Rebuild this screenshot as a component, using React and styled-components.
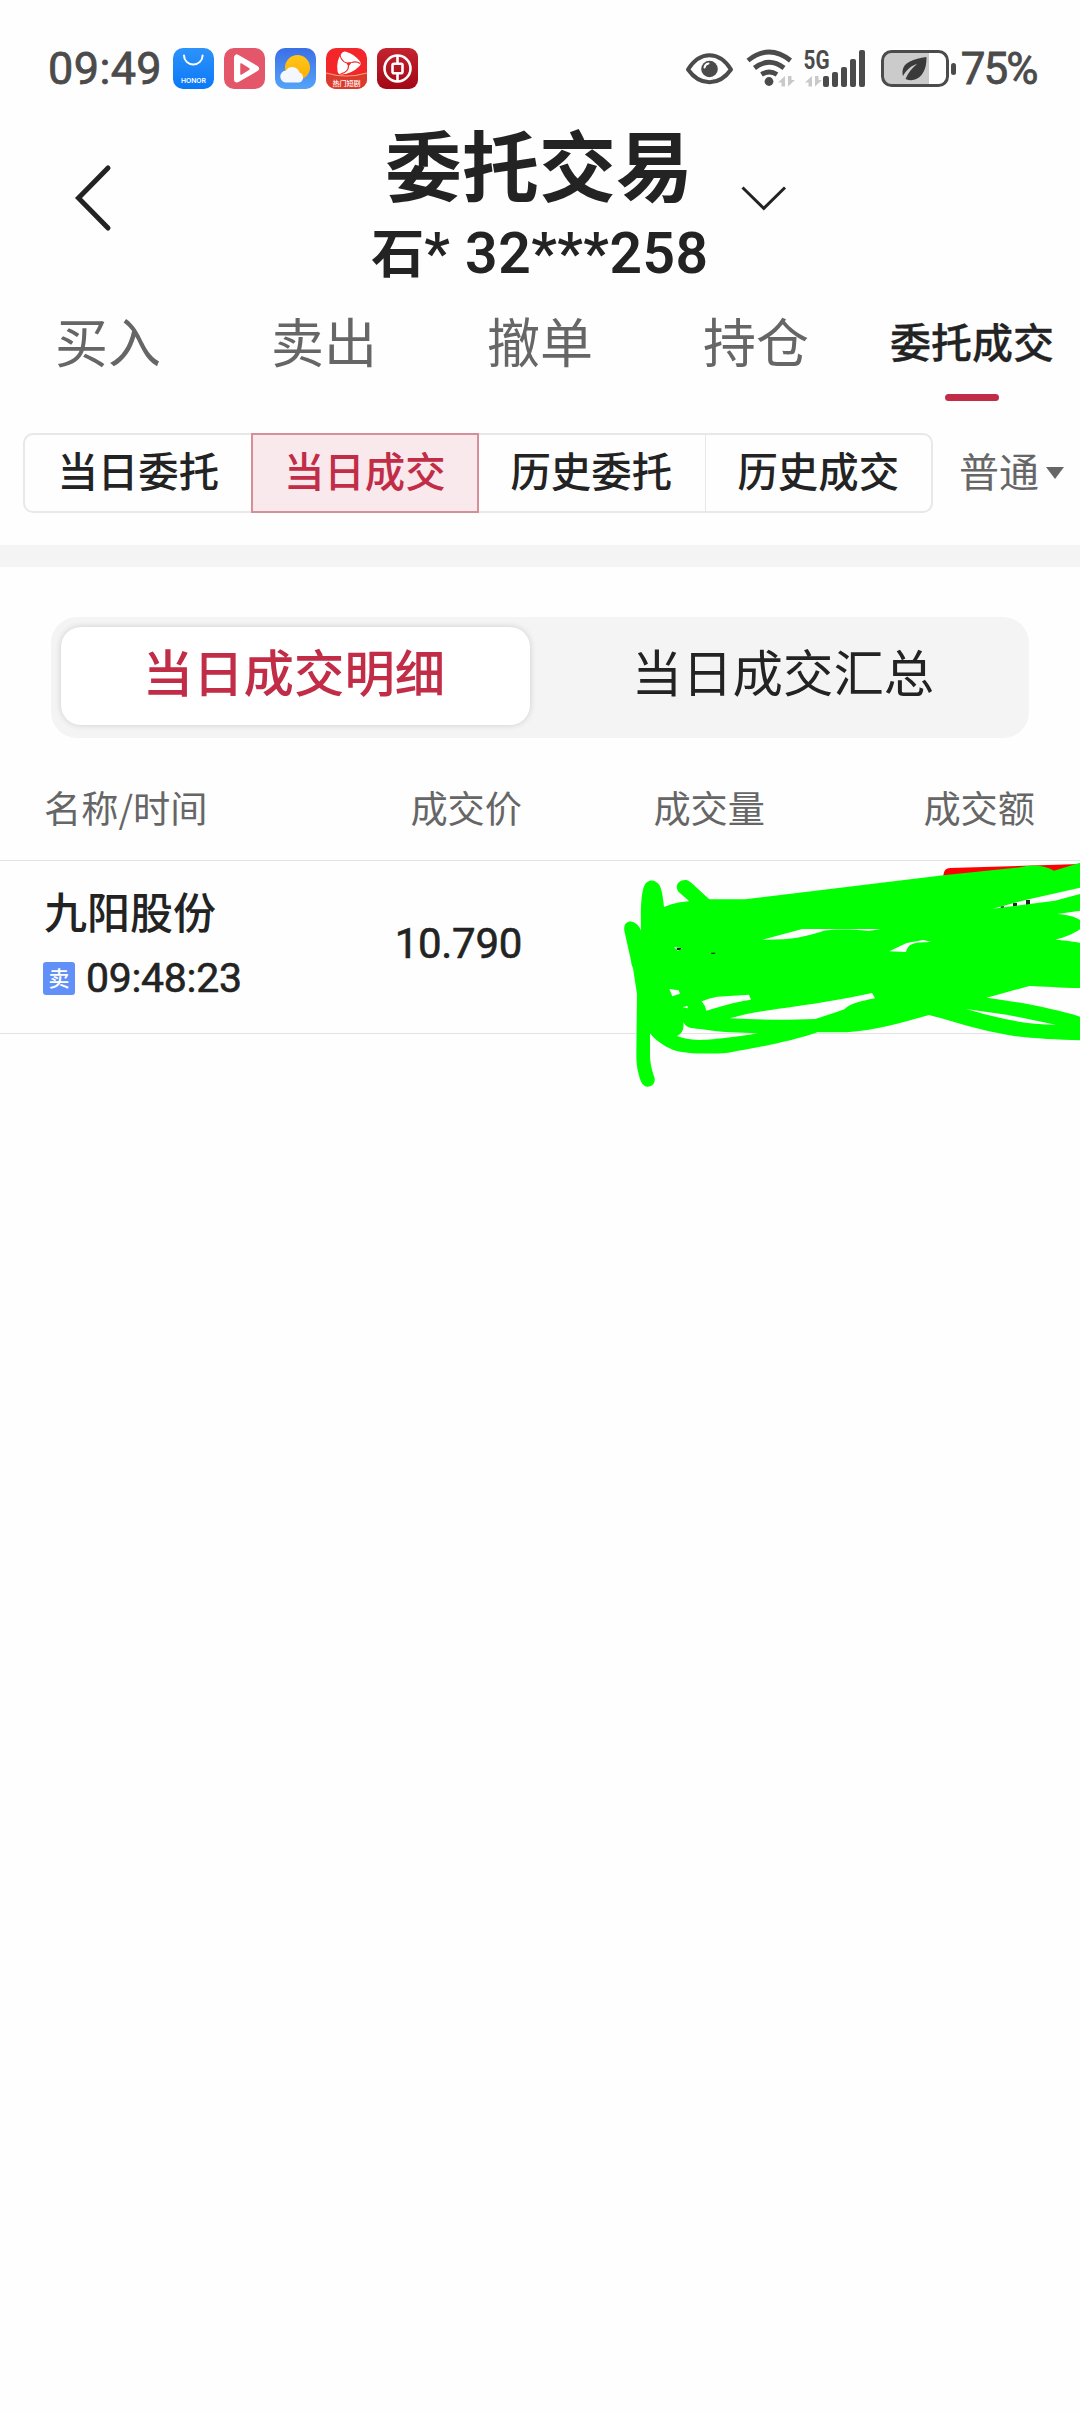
import React from "react";
import styled, { createGlobalStyle } from "styled-components";

const Global = createGlobalStyle`
  * { box-sizing: border-box; }
  body { margin: 0; background: #fefefe; font-family: "Noto Sans CJK SC", sans-serif; color: #232323; }
  svg { display: block; flex: none; overflow: visible; }
`;
const Screen = styled.div`
  width: 1080px; height: 2412px; overflow: hidden; display: flex; flex-direction: column;
`;
const StatusBar = styled.header`
  height: 120px; flex: none; padding: 17px 43.5px 0 48px; display: flex; align-items: center; justify-content: space-between; color: #4b4b4b;
`;
const StatusSide = styled.div`display: flex; align-items: center;`;
const StatusText = styled.span`
  font: 400 ${(p) => p.$size || 45}px/52px Roboto, sans-serif; letter-spacing: ${(p) => p.$track || 0}px; -webkit-text-stroke: 0.8px #4b4b4b;
`;
const AppIcons = styled.div`display: flex; gap: 10px; margin-left: 11px;`;
const TitleBar = styled.div`
  height: 170px; flex: none; display: grid; grid-template-columns: 360px 360px 360px;
`;
const BackSlot = styled.div`padding: 44px 0 0 74px;`;
const MenuSlot = styled.div`padding: 65px 0 0 20px;`;
const TitleStack = styled.div`display: flex; flex-direction: column; align-items: center; white-space: nowrap;`;
const Title = styled.h1`margin: 0; font-size: 77px; line-height: 86px; font-weight: 700; padding-right: 2px;`;
const Account = styled.div`
  margin-top: 16px; font-weight: 700; font-size: 53px; line-height: 56px; display: flex;
`;
const AccountNumber = styled.span`
  font-family: Roboto, sans-serif; font-size: 57px; font-weight: 600; letter-spacing: 0.5px; white-space: pre; padding-top: 4px;
`;
const Tabs = styled.nav`display: grid; grid-template-columns: repeat(5, 1fr); height: 143px; flex: none;`;
const Tab = styled.div`
  display: flex; flex-direction: column; align-items: center; white-space: nowrap;
  font-size: ${(p) => (p.$active ? 41 : 53)}px; font-weight: ${(p) => (p.$active ? 500 : 400)};
  -webkit-text-stroke: ${(p) => (p.$active ? 0.3 : 0)}px;
  line-height: 60px; padding-top: 20px; color: ${(p) => (p.$active ? "#232323" : "#666")};
  &::after { content: ""; display: ${(p) => (p.$active ? "block" : "none")}; width: 54px; height: 7px; border-radius: 4px; background: #c12c46; margin-top: 24px; }
`;
const FilterBar = styled.div`
  height: 112px; flex: none; padding-left: 23px; display: flex; align-items: flex-start;
`;
const FilterGroup = styled.div`
  width: 910px; height: 80px; border: 2px solid #e8e8e8; border-radius: 10px; display: grid; grid-template-columns: repeat(4, 1fr);
`;
const Filter = styled.div`
  display: flex; align-items: center; justify-content: center; font-size: 40.4px; line-height: 40px; font-weight: 500; padding-bottom: 6px;
  margin: ${(p) => (p.$active ? "-2px -1px" : "0")};
  color: ${(p) => (p.$active ? "#c12c46" : "#232323")};
  background: ${(p) => (p.$active ? "#f9e8ec" : "transparent")};
  border: ${(p) => (p.$active ? "2px solid #d48f9b" : "0 solid #e8e8e8")};
  border-left-width: ${(p) => (p.$divided ? "1px" : p.$active ? "2px" : 0)};
`;
const AccountType = styled.div`
  margin-left: 26px; height: 80px; display: flex; align-items: center; gap: 7px; font-size: 40px; line-height: 40px; color: #666;
`;
const TypeLabel = styled.span`padding-bottom: 6px;`;
const Band = styled.div`height: 22px; flex: none; background: #f4f4f4;`;
const Segments = styled.div`
  margin: 50px 51px 0; height: 121px; flex: none; border-radius: 26px; background: #f4f4f4; padding: 10px 1px 13px 10px; display: grid; grid-template-columns: 469px 1fr;
`;
const Segment = styled.div`
  display: flex; align-items: center; justify-content: center; font-size: 50.4px; line-height: 50px; border-radius: 20px;
  padding: 0 ${(p) => (p.$active ? 3 : 0)}px 11px ${(p) => (p.$active ? 0 : 8)}px;
  font-weight: ${(p) => (p.$active ? 500 : 400)}; color: ${(p) => (p.$active ? "#c12c46" : "#232323")};
  background: ${(p) => (p.$active ? "#fff" : "transparent")};
  box-shadow: ${(p) => (p.$active ? "0 0 6px rgba(0,0,0,0.16)" : "none")};
`;
const Columns = styled.div`
  display: grid; grid-template-columns: 300px 178px 243px 270px; padding-left: 44px; border-bottom: 1px solid #e3e3e3;
`;
const HeadRow = styled(Columns)`
  height: 123px; flex: none; padding-top: 49px; font-size: 37.2px; line-height: 40px; color: #666;
`;
const HeadCell = styled.div`text-align: ${(p) => (p.$left ? "left" : "right")};`;
const DataRow = styled(Columns)`height: 173px; flex: none; position: relative;`;
const Stock = styled.div`padding-top: 25px; font-size: 43px; line-height: 48px; font-weight: 500;`;
const TimeLine = styled.div`display: flex; align-items: center; gap: 11px; margin-top: 20px; margin-left: -1px;`;
const SideBadge = styled.span`
  width: 32px; height: 33px; border-radius: 3px; background: #6190f8; color: #fff; font-size: 21px; line-height: 31px; text-align: center; font-weight: 500;
`;
const Num = styled.span`
  font: 400 ${(p) => p.$size}px/48px Roboto, sans-serif; -webkit-text-stroke: 0.6px #232323; letter-spacing: ${(p) => p.$track || 0}px;
`;
const Price = styled.div`text-align: right; padding-top: 59px;`;
const Scribble = styled.svg`position: absolute; left: 610px; top: -11px;`;

const TitleArrow = () => (
  <svg width="46" height="26" viewBox="0 0 46 26" fill="none" stroke="#232323" strokeWidth="3"><path d="M2.500 2.500 23.800 23.300 45 2.500" /></svg>
);

function HonorIcon() {
  return (
    <svg width="41" height="41" viewBox="0 0 41 41">
      <defs><linearGradient id="hb" x2="0" y2="1"><stop stopColor="#2d93fb" /><stop offset="1" stopColor="#0b78f6" /></linearGradient></defs>
      <rect width="41" height="41" rx="10" fill="url(#hb)" />
      <path d="M11 7.500a9.300 9 0 0 0 18.600 0" fill="none" stroke="#fff" strokeWidth="2" strokeLinecap="round" />
      <text x="20.500" y="34.800" textAnchor="middle" fontFamily="Inter, sans-serif" fontSize="6.800" fontWeight="600" textLength="25" fill="#fff">HONOR</text>
    </svg>
  );
}
function VideoIcon() {
  return (
    <svg width="41" height="41" viewBox="0 0 41 41">
      <rect width="41" height="41" rx="10" fill="#e4566a" />
      <path d="M13 9.500v22L32 20.500z" fill="#fff" stroke="#fff" strokeWidth="6" strokeLinejoin="round" />
      <path d="M17 16v10l8-5z" fill="#e4566a" stroke="#e4566a" strokeWidth="1.500" strokeLinejoin="round" />
    </svg>
  );
}
function WeatherIcon() {
  return (
    <svg width="41" height="41" viewBox="0 0 41 41">
      <defs>
        <linearGradient id="wb" x2="0" y2="1"><stop stopColor="#3c6fe6" /><stop offset="1" stopColor="#54a4f8" /></linearGradient>
        <linearGradient id="ws" x2="0" y2="1"><stop stopColor="#ffc61c" /><stop offset="1" stopColor="#ffae00" /></linearGradient>
      </defs>
      <rect width="41" height="41" rx="10" fill="url(#wb)" />
      <circle cx="22.500" cy="19.500" r="12.500" fill="url(#ws)" />
      <path d="M11.500 34.500a6 6 0 0 1-.5-12 7.500 7.500 0 0 1 13.500 2 5.200 5.200 0 0 1-.5 10z" fill="#f4f7fd" />
    </svg>
  );
}
function DramaIcon() {
  return (
    <svg width="41" height="41" viewBox="0 0 41 41">
      <rect width="41" height="41" rx="10" fill="#f3262a" />
      <path d="M0 25q20 6 41 0v6a10 10 0 0 1-10 10H10A10 10 0 0 1 0 31z" fill="#dc3a2c" />
      <path d="M0 25q20 6 41 0" fill="none" stroke="#f9a27c" strokeWidth="1.200" />
      <path d="M19 7.500Q14 14 15.500 22.500 24 22 30.500 15.500 26 9.500 19 7.500z" fill="#fff" stroke="#fff" strokeWidth="8" strokeLinejoin="round" />
      <path d="M20 14.500l6-.5-3.500 4.500z" fill="#ee282b" />
      <path d="M20.500 15Q15 13.500 13.500 5M25.500 14.500q5-1.500 8.500 1M22.500 18q0 6-8 8" fill="none" stroke="#ee282b" strokeWidth="1.200" />
      <text x="20.500" y="37.500" textAnchor="middle" fontFamily="Noto Sans CJK SC, sans-serif" fontSize="7" fontWeight="500" fill="#fff">热门短剧</text>
    </svg>
  );
}
function BankIcon() {
  return (
    <svg width="41" height="41" viewBox="0 0 41 41">
      <defs><linearGradient id="bb" x2="0" y2="1"><stop stopColor="#c4232f" /><stop offset="1" stopColor="#a30715" /></linearGradient></defs>
      <rect width="41" height="41" rx="9" fill="url(#bb)" />
      <g fill="none" stroke="#fff" strokeWidth="2.600"><circle cx="20.500" cy="20.500" r="13" /><rect x="15.500" y="15.800" width="10" height="9.400" rx="1.500" /><path d="M20.500 7.500v8.300M20.500 25.200v8.300" /></g>
    </svg>
  );
}
function StatusGlyphs() {
  return (
    <svg width="274" height="42" viewBox="0 0 274 42" fill="#4b4b4b">
      <path d="M1 21.500C13 2.500 32 2.500 44 21.500C32 38.500 13 38.500 1 21.500z" fill="none" stroke="#4b4b4b" strokeWidth="4" strokeLinejoin="round" />
      <circle cx="22.500" cy="21" r="8.300" />
      <path d="M17.500 19.500a5 5 0 0 1 4-4" fill="none" stroke="#fefefe" strokeWidth="2" strokeLinecap="round" />
      <g fill="none" stroke="#4b4b4b" strokeWidth="4.800"><path d="M61 12.500q21-17 42.500 0M67.500 20q14.500-11.500 29.500 0M74.500 26.500q7.700-5 15.500 0" /></g>
      <circle cx="82" cy="33.500" r="4.400" />
      <g fill="#c9c9c9"><path d="M98 28v10.500h-3.500v-4h-3.500zM101 38.500V28h3.500v4h3.500zM125 28v10.500h-3.500v-4h-3.500zM128 38.500V28h3.500v4h3.500z" /></g>
      <text x="116.500" y="20.500" fontFamily="Roboto, sans-serif" fontWeight="700" fontSize="26" textLength="26" lengthAdjust="spacingAndGlyphs">5G</text>
      <rect x="136" y="28" width="6" height="11" rx="2" /><rect x="145" y="24" width="6" height="15" rx="2" /><rect x="154" y="19" width="6" height="20" rx="2" /><rect x="163" y="11" width="6" height="28" rx="2" /><rect x="172" y="2" width="6" height="37" rx="2" />
      <path d="M204 4h38v33h-38a9 9 0 0 1-9-9V13a9 9 0 0 1 9-9z" fill="#cbcbcb" />
      <rect x="195.500" y="3.500" width="65" height="34" rx="9" fill="none" stroke="#4b4b4b" strokeWidth="3" />
      <rect x="264" y="15" width="5" height="12" rx="2.500" />
      <path d="M239.500 9c-13 2-23 5-24 14-.2 3 .5 5 .5 5 4-7 8-10 14-12-5 4-9 9-11.500 15 6 2.500 12 1 16-4 4-5 5-11 5-18z" fill="#3a3a3a" />
    </svg>
  );
}

const INK = `M162 171C190 160 210 156 238 154L207 127C190 108 208 86 232 91C245 96 275 128 298 148H405
L1000 76L1230 52Q1285 38 1332 62L1410 38V113L1250 149L1148 176L1335 152L1410 132V182L1342 192C1370 194 1395 200 1410 210V238C1390 252 1360 264 1336 269C1370 271 1395 276 1410 278V414C1350 414 1300 409 1258 408L1130 443C1230 456 1340 478 1410 500V571C1330 568 1230 564 1180 552C1100 538 1030 514 957 495C870 520 800 540 710 547H622C540 576 440 592 355 608C290 613 230 612 190 600C160 588 138 572 120 550V620C122 650 128 665 134 685C136 704 122 711 111 710C96 706 92 694 88 680C81 655 79 640 79 610L81 432L69 354C62 340 64 330 60 318L43 242C40 222 52 213 66 215C82 219 88 230 93 242C92 190 92 140 101 112C110 84 138 86 150 108C157 125 159 145 162 171z
M457 269L577 237H812L776 243C720 237 670 238 642 242C590 260 540 270 457 269z
M838 304L890 279L940 270L965 276C915 277 895 278 888 306z
M192 291L203 302L218 295z
M178 417L206 421L210 431L187 439z
M217 472L232 468L234 475z
M275 454Q300 443 322 440L417 434L423 449C370 457 330 470 289 482Q286 466 275 454z
M360 505C410 490 450 485 500 477C610 462 700 448 786 429L795 445C750 454 720 460 703 478C670 490 640 500 616 507C520 511 440 509 360 505z
M220 516C228 532 240 535 270 537C330 547 390 548 442 550C380 562 300 570 265 570C240 569 218 565 201 558C219 550 222 535 220 516z
M1068 477L1190 494L1337 524C1240 523 1170 506 1068 477z`;

export default function App() {
  return (
    <Screen>
      <Global />
      <StatusBar>
        <StatusSide>
          <StatusText $track={0.4}>09:49</StatusText>
          <AppIcons><HonorIcon /><VideoIcon /><WeatherIcon /><DramaIcon /><BankIcon /></AppIcons>
        </StatusSide>
        <StatusSide><StatusGlyphs /><StatusText $size={44} $track={-2}>75%</StatusText></StatusSide>
      </StatusBar>
      <TitleBar>
        <BackSlot>
          <svg width="40" height="68" viewBox="0 0 40 68" fill="none" stroke="#232323" strokeWidth="5" strokeLinecap="round"><path d="M34 4 4.500 34 34 64" /></svg>
        </BackSlot>
        <TitleStack><Title>委托交易</Title><Account>石<AccountNumber>* 32***258</AccountNumber></Account></TitleStack>
        <MenuSlot><TitleArrow /></MenuSlot>
      </TitleBar>
      <Tabs>
        <Tab>买入</Tab><Tab>卖出</Tab><Tab>撤单</Tab><Tab>持仓</Tab><Tab $active>委托成交</Tab>
      </Tabs>
      <FilterBar>
        <FilterGroup>
          <Filter>当日委托</Filter><Filter $active>当日成交</Filter><Filter>历史委托</Filter><Filter $divided>历史成交</Filter>
        </FilterGroup>
        <AccountType><TypeLabel>普通</TypeLabel><svg width="18" height="12" viewBox="0 0 18 12"><path d="M0 0h18L9 12z" fill="#666" /></svg></AccountType>
      </FilterBar>
      <Band />
      <Segments><Segment $active>当日成交明细</Segment><Segment>当日成交汇总</Segment></Segments>
      <HeadRow><HeadCell $left>名称/时间</HeadCell><HeadCell>成交价</HeadCell><HeadCell>成交量</HeadCell><HeadCell>成交额</HeadCell></HeadRow>
      <DataRow>
        <div>
          <Stock>九阳股份</Stock>
          <TimeLine><SideBadge>卖</SideBadge><Num $size={41} $track={-0.3}>09:48:23</Num></TimeLine>
        </div>
        <Price><Num $size={42} $track={-0.3}>10.790</Num></Price>
        <Scribble width="470" height="250" viewBox="0 0 1410 750">
          <path d="M1000 76Q1002 54 1020 54L1410 42V100H1000z" fill="#f00" />
          <path d="M1172 169h10v8h-10zM1209 159h12v16h-12zM1248 150h12v20h-12zM200 293h14v7h-14z" fill="#232323" />
          <path d={INK} fill="#0f0" fillRule="evenodd" />
          <path d="M303 308h14l-4 4h-8z" fill="#232323" />
        </Scribble>
      </DataRow>
    </Screen>
  );
}
